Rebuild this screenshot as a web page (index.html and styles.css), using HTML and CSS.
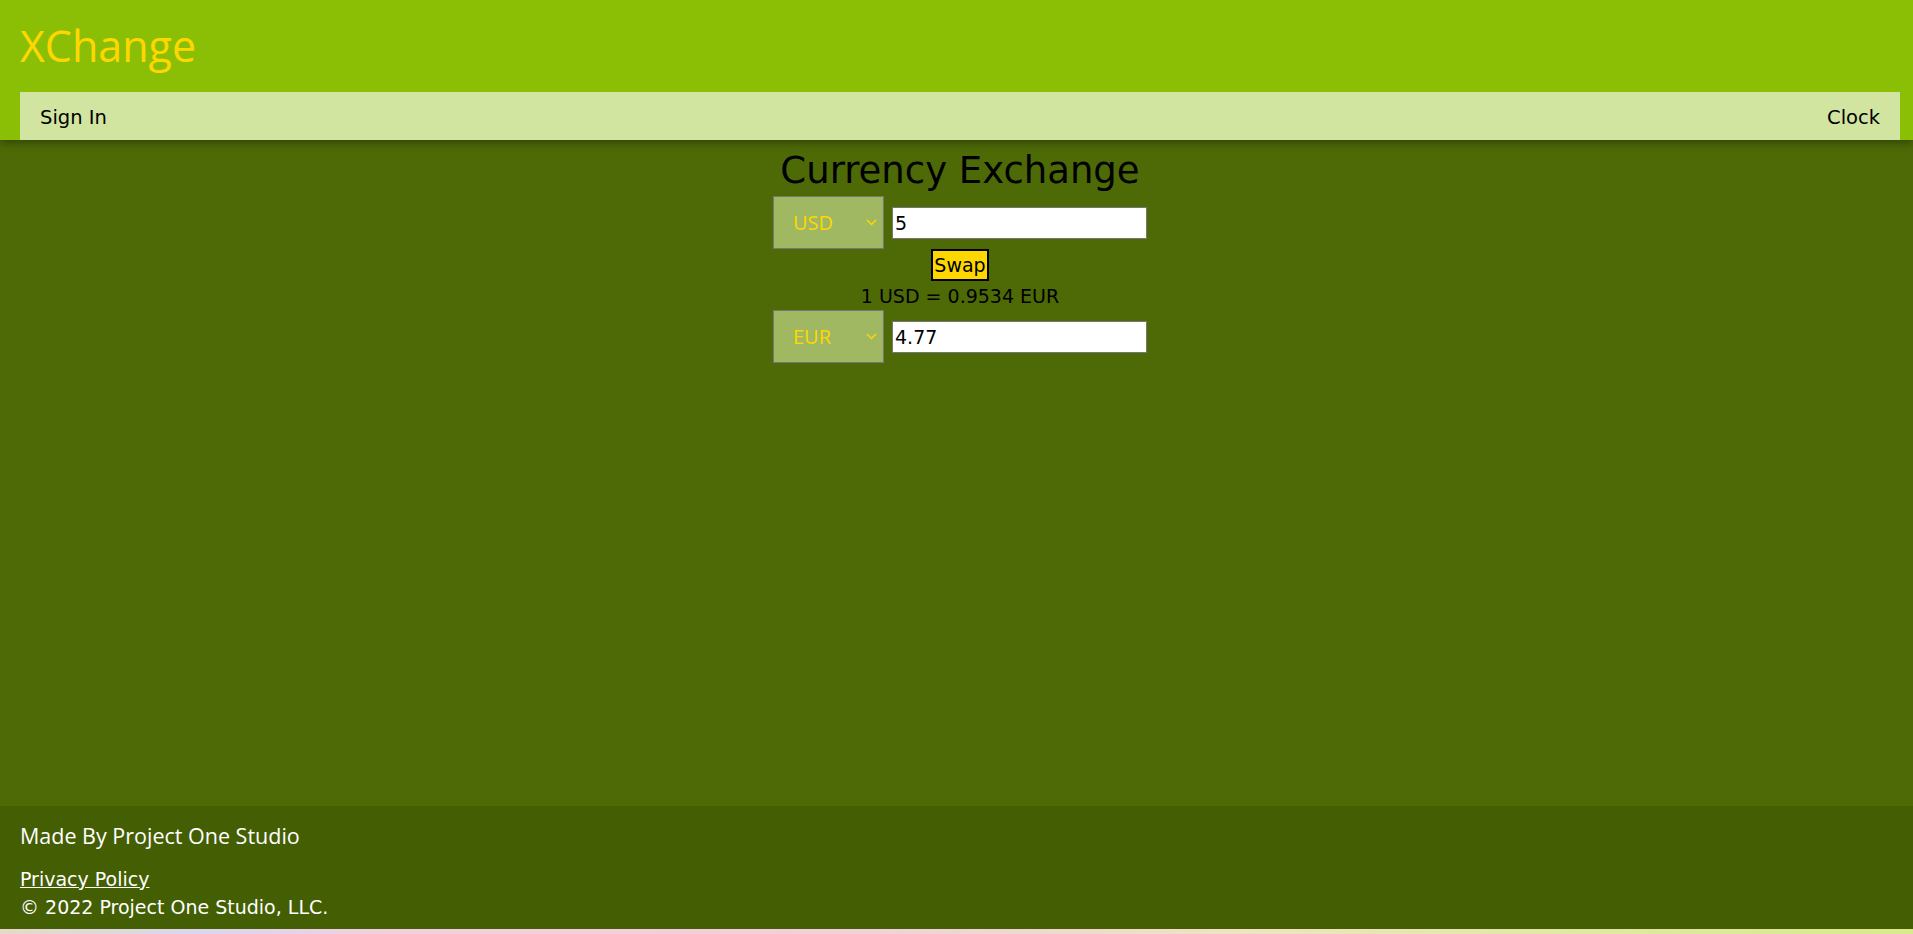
FILE: index.html
```html
<!DOCTYPE html>
<html lang="en">
<head>
<meta charset="utf-8">
<title>XChange</title>
<link rel="stylesheet" href="styles.css">
</head>
<body>
<header class="site-header">
  <h1 class="brand">XChange</h1>
  <nav class="navbar">
    <a class="nav-link" href="#">Sign In</a>
    <a class="nav-link" href="#">Clock</a>
  </nav>
</header>
<main class="main">
  <h2 class="title">Currency Exchange</h2>
  <div class="row row-first">
    <select class="currency"><option>USD</option><option>EUR</option></select>
    <input class="amount" type="text" value="5">
  </div>
  <button class="swap" type="button">Swap</button>
  <div class="rate">1 USD = 0.9534 EUR</div>
  <div class="row">
    <select class="currency"><option>EUR</option><option>USD</option></select>
    <input class="amount" type="text" value="4.77">
  </div>
</main>
<footer class="site-footer">
  <h3 class="made-by">Made By Project One Studio</h3>
  <div class="legal">
    <a class="privacy" href="#">Privacy Policy</a>
    <div class="copy">© 2022 Project One Studio, LLC.</div>
  </div>
</footer>
</body>
</html>
```

FILE: styles.css
```css
html, body {
  margin: 0;
  padding: 0;
}
body {
  min-height: 100vh;
  box-sizing: border-box;
  display: flex;
  flex-direction: column;
  padding-bottom: 5px;
  background: linear-gradient(90deg, #e6d9c9 0%, #dcd6ec 10%, #f2cfe0 20%, #f3cedd 40%, #eed8d0 55%, #efe3c2 65%, #e3e6a8 80%, #d9ea8c 100%);
  font-family: "DejaVu Sans", Verdana, sans-serif;
}
.site-header {
  background: #8bbf06;
  padding: 0 13px 0 20px;
  position: relative;
  z-index: 1;
  box-shadow: 0 3px 8px rgba(0, 0, 0, 0.35);
}
.brand {
  margin: 0;
  height: 92px;
  line-height: 92px;
  font-family: "Open Sans", "Noto Sans", sans-serif;
  font-weight: 400;
  font-size: 43px;
  color: #ffd700;
}
.navbar {
  background: #d2e5a0;
  height: 48px;
  display: flex;
  justify-content: space-between;
  align-items: center;
  padding: 2px 20px 0 20px;
  box-sizing: border-box;
}
.nav-link {
  color: #000;
  text-decoration: none;
  font-size: 19.5px;
}
.main {
  flex: 1;
  background: #4d6a07;
  display: flex;
  flex-direction: column;
  align-items: center;
  padding: 9px 0 0 7px;
}
.title {
  margin: 0;
  font-weight: 400;
  font-size: 37px;
  line-height: 43px;
  color: #000;
}
.row {
  display: flex;
  align-items: center;
  gap: 8px;
}
.row-first {
  margin-top: 4px;
}
.currency {
  appearance: none;
  -webkit-appearance: none;
  width: 111px;
  height: 53px;
  box-sizing: border-box;
  border: 1px solid #767676;
  border-radius: 0;
  background-color: #a0b862;
  background-image: url("data:image/svg+xml;utf8,<svg xmlns='http://www.w3.org/2000/svg' width='11' height='7' viewBox='0 0 11 7'><path d='M1 1 L5.5 5.5 L10 1' fill='none' stroke='%23ffd700' stroke-width='1.5'/></svg>");
  background-repeat: no-repeat;
  background-position: right 6px center;
  color: #ffd700;
  font-family: "Open Sans", "Noto Sans", sans-serif;
  font-size: 20px;
  padding: 0 0 0 19px;
}
.amount {
  width: 255px;
  height: 32px;
  box-sizing: border-box;
  border: 1px solid #767676;
  background: #fff;
  color: #000;
  font-family: "DejaVu Sans", Verdana, sans-serif;
  font-size: 19px;
  padding: 0 2px;
  margin: 0;
}
.swap {
  margin: 0;
  height: 32px;
  box-sizing: border-box;
  border: 2px solid #000;
  background: #ffd700;
  color: #000;
  font-family: "DejaVu Sans", Verdana, sans-serif;
  font-size: 19px;
  padding: 0 1px;
  border-radius: 0;
}
.rate {
  margin-top: 4px;
  font-size: 19px;
  line-height: 22px;
  color: #000;
  margin-bottom: 3px;
}
.site-footer {
  background: #445e03;
  color: #fff;
  padding: 15px 20px 8px 20px;
  font-family: "Open Sans", "Noto Sans", sans-serif;
}
.made-by {
  margin: 0 0 15px 0;
  font-weight: 400;
  font-size: 21.5px;
  line-height: 29px;
}
.legal {
  font-family: "DejaVu Sans", Verdana, sans-serif;
  font-size: 19px;
  line-height: 28px;
}
.privacy {
  color: #fff;
  text-decoration: underline;
}
.copy {
  color: #fff;
}
```
